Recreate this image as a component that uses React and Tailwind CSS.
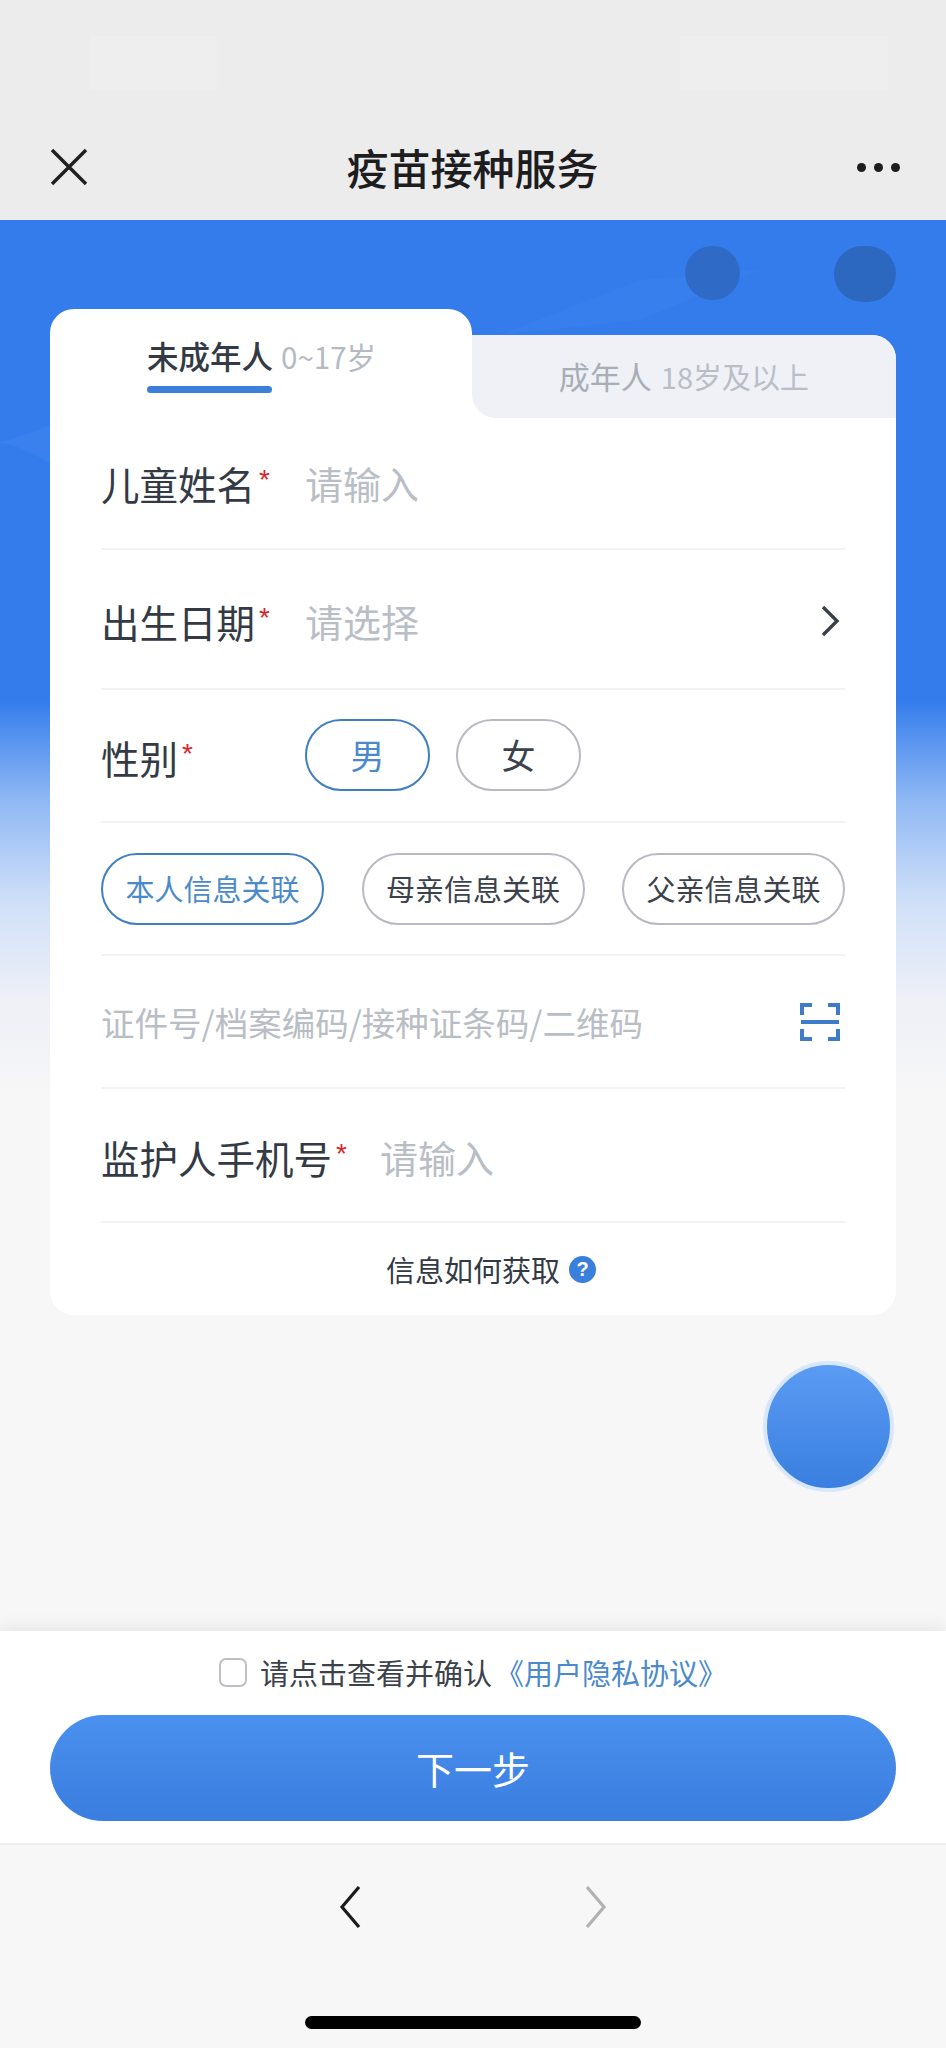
import React from 'react';

const Star = () => (
  <span className="text-[28px] leading-none text-[#d8262c] font-['Liberation_Sans',sans-serif] self-start mt-[2px] ml-[4px]">*</span>
);

const Row = ({ className, children }) => (
  <div className={`flex items-center border-b-2 border-[#f2f3f5] ${className}`}>{children}</div>
);

const Pill = ({ active, className, children }) => (
  <div
    className={`flex items-center justify-center h-[72px] rounded-full border-[2.5px] bg-white ${
      active ? 'border-[#3f7fc0] text-[#4a8aca]' : 'border-[#b7bac1] text-[#3c424c]'
    } ${className}`}
  >
    {children}
  </div>
);

const App = () => {
  return (
    <div className="flex flex-col w-[946px] h-[2048px] overflow-hidden bg-[#f7f7f7] font-['Noto_Sans_CJK_SC',sans-serif]">
      {/* Top bar */}
      <header className="h-[220px] flex-shrink-0 bg-[#ececec] flex flex-col">
        <div className="flex justify-between px-[58px] pt-[36px] pl-[90px]">
          <div className="w-[127px] h-[54px] bg-[#eeeeee]" />
          <div className="w-[208px] h-[54px] bg-[#eeeeee]" />
        </div>
        <div className="flex items-center justify-between pl-[50px] pr-[46px] mt-[56px]">
          <svg width="38" height="38" viewBox="0 0 38 38" fill="none" stroke="#1f1f1f" strokeWidth="3.4">
            <path d="M2 2 36 36M36 2 2 36" />
          </svg>
          <h1 className="text-[42px] leading-none font-medium text-[#1d1d1f]">疫苗接种服务</h1>
          <div className="flex gap-[8px]">
            <span className="w-[9px] h-[9px] rounded-full bg-[#1d1d1f]" />
            <span className="w-[9px] h-[9px] rounded-full bg-[#1d1d1f]" />
            <span className="w-[9px] h-[9px] rounded-full bg-[#1d1d1f]" />
          </div>
        </div>
      </header>

      {/* Page body */}
      <main className="relative h-[1411px] flex-shrink-0 px-[50px] bg-[linear-gradient(to_bottom,#347cec_0px,#347cec_480px,#8fb8f4_580px,#cfdff8_680px,#eef0f7_780px,#f7f7f7_880px)]">
        <svg className="absolute left-0 top-0" width="946" height="300" viewBox="0 0 946 300" fill="none">
          <path d="M0 222Q30 215 60 200V250Q25 226 0 223Z" fill="#3a81ee" />
          <path d="M500 115 640 60 760 50 640 100Z" fill="#367fed" />
        </svg>
        <div className="relative flex justify-end pt-[26px] h-[89px]">
          <div className="w-[55px] h-[54px] rounded-full bg-[#2f6bc6]" />
          <div className="w-[62px] h-[56px] ml-[94px] rounded-full bg-[#2c68c0]" />
        </div>

        {/* Tabs */}
        <div className="relative flex items-end">
          <div className="w-[422px] h-[109px] bg-white rounded-t-[24px] pl-[97px] pt-[26px]">
            <div className="flex items-baseline">
              <span className="text-[31.5px] leading-[40px] font-medium text-[#333a45]">未成年人</span>
              <span className="text-[29.5px] leading-[40px] ml-[8px] text-[#b4b9c2]">0~17岁</span>
            </div>
            <div className="w-[125px] h-[7px] mt-[10px] rounded-full bg-[#3c7fd8]" />
          </div>
          <div className="flex-1 h-[83px] bg-white rounded-tr-[24px]">
            <div className="flex items-baseline justify-end h-full pt-[21px] pr-[87px] bg-[#eff1f7] rounded-tr-[24px] rounded-bl-[24px]">
              <span className="text-[31px] leading-[40px] text-[#a9adb6]">成年人</span>
              <span className="text-[29px] leading-[40px] ml-[9px] text-[#b9bdc6]">18岁及以上</span>
            </div>
          </div>
        </div>

        {/* Form */}
        <div className="relative bg-white rounded-b-[24px] px-[51px] text-[#333a45]">
          <Row className="h-[132px]">
            <div className="flex items-center w-[204px] text-[38.5px] leading-none">儿童姓名<Star /></div>
            <span className="text-[38px] leading-none text-[#b9bdc5]">请输入</span>
          </Row>
          <Row className="h-[140px] pt-[4px]">
            <div className="flex items-center w-[204px] text-[38.5px] leading-none">出生日期<Star /></div>
            <span className="flex-1 text-[38px] leading-none text-[#b9bdc5]">请选择</span>
            <svg width="20" height="32" viewBox="0 0 20 32" fill="none" stroke="#3a3f48" strokeWidth="3.4" className="mr-[5px]">
              <path d="M3 2 17 16 3 30" />
            </svg>
          </Row>
          <Row className="h-[133px] pb-[2px]">
            <div className="flex items-center w-[204px] text-[38.5px] leading-none pt-[6px]">性别<Star /></div>
            <Pill active className="w-[125px] text-[34px]">男</Pill>
            <Pill className="w-[125px] ml-[26px] text-[34px]">女</Pill>
          </Row>
          <Row className="h-[133px] justify-between">
            <Pill active className="w-[223px] text-[29px]">本人信息关联</Pill>
            <Pill className="w-[223px] text-[29px]">母亲信息关联</Pill>
            <Pill className="w-[223px] text-[29px]">父亲信息关联</Pill>
          </Row>
          <Row className="h-[133px] justify-between">
            <span className="text-[33.5px] leading-none text-[#b9bdc5]">证件号/档案编码/接种证条码/二维码</span>
            <svg width="40" height="40" viewBox="0 0 40 40" fill="none" stroke="#3c7cc8" strokeWidth="4" className="mr-[5px]">
              <path d="M2 13V3H12M28 3H38V13M2 27V37H12M28 37H38V27" />
              <path d="M1 20H39" />
            </svg>
          </Row>
          <Row className="h-[134px] pt-[4px]">
            <div className="flex items-center text-[38.5px] leading-none">监护人手机号<Star /></div>
            <span className="ml-[33px] text-[38px] leading-none text-[#b9bdc5]">请输入</span>
          </Row>
          <div className="flex items-center justify-center h-[92px] pl-[36px]">
            <span className="text-[29px] leading-none">信息如何获取</span>
            <span className="flex items-center justify-center w-[27px] h-[27px] ml-[9px] rounded-full bg-[#3a7fdb] text-white text-[20px] leading-none font-bold font-['Liberation_Sans',sans-serif]">?</span>
          </div>
        </div>

        {/* Floating button */}
        <div className="absolute left-[763px] top-[1141px] w-[131px] h-[131px] rounded-full border-4 border-[#d8e7fc] bg-[linear-gradient(to_bottom,#5a9bf3,#3a7fe0)]" />
      </main>

      {/* Agreement and next step */}
      <section className="relative h-[214px] flex-shrink-0 px-[50px] bg-white border-b-2 border-[#eeeeee] shadow-[0_-6px_14px_rgba(0,0,0,0.06)]">
        <div className="flex items-center justify-center h-[82px]">
          <span className="w-[28px] h-[29px] rounded-[7px] border-[2.5px] border-[#bcbfc4]" />
          <span className="ml-[13px] text-[29px] leading-none text-[#3c424c]">请点击查看并确认</span>
          <span className="ml-[3px] text-[29px] leading-none text-[#4a8aca]">《用户隐私协议》</span>
        </div>
        <button className="mt-[2px] w-full h-[106px] rounded-full bg-[linear-gradient(to_bottom,#4a90ee,#3a7edf)] text-[38px] leading-none text-white">下一步</button>
      </section>

      {/* Browser nav */}
      <footer className="relative flex-1 bg-[#f7f7f7]">
        <div className="flex justify-center gap-[224px] pt-[41px]">
          <svg width="22" height="42" viewBox="0 0 22 42" fill="none" stroke="#1c1c1c" strokeWidth="3.2">
            <path d="M20 1 3 21 20 41" />
          </svg>
          <svg width="22" height="42" viewBox="0 0 22 42" fill="none" stroke="#b1b1b1" strokeWidth="3.2">
            <path d="M2 1 19 21 2 41" />
          </svg>
        </div>
        <div className="absolute left-[305px] bottom-[19px] w-[336px] h-[13px] rounded-full bg-black" />
      </footer>
    </div>
  );
};

export default App;
